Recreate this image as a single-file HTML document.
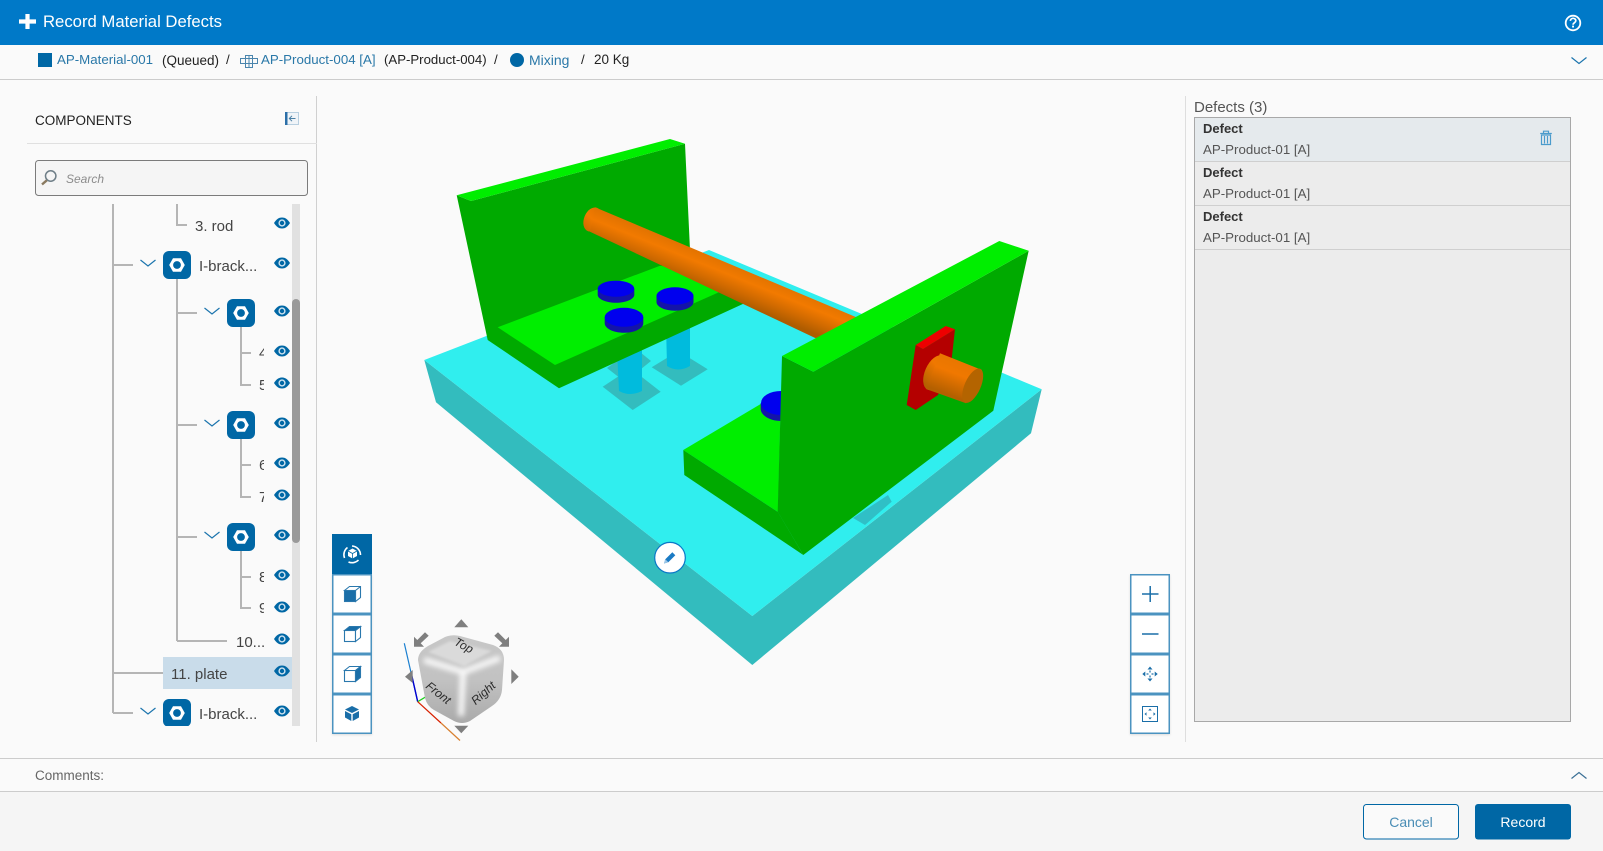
<!DOCTYPE html>
<html lang="en">
<head>
<meta charset="utf-8">
<title>Record Material Defects</title>
<style>
html,body{margin:0;padding:0;width:1603px;height:851px;overflow:hidden;background:#fafafa}
body{font-family:"Liberation Sans",sans-serif;position:relative}
#g{position:absolute;left:0;top:0}
.t{position:absolute;white-space:nowrap;line-height:20px;height:20px}
.l{color:#2a78a8;font-size:13.3px}
.k{color:#222;font-size:13.3px}
.n{color:#444;font-size:15px}
.b{font-weight:bold;font-size:13px;color:#333;left:1203px}
.d{font-size:13.3px;color:#555;left:1203px}
.clip{overflow:hidden}
</style>
</head>
<body>
<svg id="g" width="1603" height="851" viewBox="0 0 1603 851" xmlns="http://www.w3.org/2000/svg">
<defs>
<linearGradient id="rod" gradientUnits="userSpaceOnUse" x1="725" y1="260" x2="712" y2="292">
<stop offset="0" stop-color="#e07200"/><stop offset=".35" stop-color="#f27a00"/><stop offset=".7" stop-color="#d06a00"/><stop offset="1" stop-color="#ae5c00"/>
</linearGradient>
<linearGradient id="stub" gradientUnits="userSpaceOnUse" x1="963" y1="361" x2="950" y2="395">
<stop offset="0" stop-color="#e87600"/><stop offset=".4" stop-color="#f07800"/><stop offset="1" stop-color="#b46000"/>
</linearGradient>
<linearGradient id="cb" x1="0" y1="0" x2="0" y2="1">
<stop offset="0" stop-color="#c8c8c8"/><stop offset=".5" stop-color="#c2c2c2"/><stop offset="1" stop-color="#a8a8a8"/>
</linearGradient>
<filter id="bl" x="-30%" y="-30%" width="160%" height="160%"><feGaussianBlur stdDeviation="2.6"/></filter>
<filter id="bs" x="-20%" y="-20%" width="140%" height="140%"><feGaussianBlur stdDeviation="1.4"/></filter>
<clipPath id="cc"><path d="M418 660Q418 652 428 646L445 637Q452 634 460 636L493 645Q504 649 504 660L502 690Q501 700 492 706L470 721Q462 725 454 721L434 710Q427 706 425 698Z"/></clipPath>
<symbol id="eye" viewBox="0 0 16 11" overflow="visible">
<path d="M0 5.5C2.5 1.5 5 0 8 0s5.5 1.5 8 5.5C13.5 9.500 11 11 8 11S2.500 9.500 0 5.500Z" fill="#0067a5"/>
<circle cx="8" cy="5.500" r="3.600" fill="#cfe3f0"/><circle cx="8" cy="5.500" r="2.200" fill="#0067a5"/>
</symbol>
<symbol id="nut" viewBox="0 0 28 28">
<rect width="28" height="28" rx="6" fill="#0067a5"/>
<path d="M6.200 14L10 7.200H18L21.800 14 18 20.800H10Z" fill="#fff"/>
<circle cx="14" cy="14" r="3.900" fill="#0067a5"/>
</symbol>
<symbol id="chev" viewBox="0 0 16 8" overflow="visible"><path d="M.5 .5L8 6.500 15.500 .5" fill="none" stroke="#1b74ad" stroke-width="1.200"/></symbol>
</defs>

<!-- header -->
<rect width="1603" height="45" fill="#0079c8"/>
<path d="M19 21.500h17M27.500 14v15" stroke="#fff" stroke-width="4.200"/>
<circle cx="1573" cy="23" r="7.300" fill="none" stroke="#fff" stroke-width="1.800"/>
<path d="M1570.400 20.900c0-3.400 5.400-3.400 5.400-.2 0 2-2.700 2-2.700 4" fill="none" stroke="#fff" stroke-width="1.700"/>
<rect x="1572.100" y="25.600" width="1.900" height="1.900" fill="#fff"/>

<!-- breadcrumb -->
<rect x="0" y="79" width="1603" height="1" fill="#cccccc"/>
<rect x="38" y="53" width="14" height="14" fill="#0067a5"/>
<g fill="none" stroke="#4a85ad" stroke-width="1">
<path d="M240.500 58.500h17v5h-17zM245.500 55.500h7v12h-7zM249 55.500v12"/>
</g>
<circle cx="517" cy="60" r="7" fill="#0067a5"/>
<use href="#chev" x="1571" y="57" width="16" height="8"/>

<!-- dividers -->
<rect x="316" y="96" width="1" height="646" fill="#d0d0d0"/>
<rect x="1185" y="96" width="1" height="646" fill="#dedede"/>
<rect x="27" y="143" width="290" height="1" fill="#e0e0e0"/>

<!-- collapse icon -->
<rect x="285.500" y="112.500" width="13" height="12" fill="#f0f4f8" stroke="#b8cfe0"/>
<rect x="285" y="112" width="2.500" height="13" fill="#2b6fa8"/>
<path d="M295.500 118.500h-6M292 115.800l-2.700 2.700 2.700 2.700" fill="none" stroke="#4a7fa5" stroke-width="1"/>

<!-- search -->
<rect x="35.500" y="160.500" width="272" height="35" rx="3" fill="#f5f5f5" stroke="#7b7b7b"/>
<circle cx="50.700" cy="176" r="5.200" fill="none" stroke="#6f7f88" stroke-width="1.500"/>
<path d="M46.800 180.300l-4.800 4.200" stroke="#8a7a60" stroke-width="2.400"/>

<!-- tree -->
<rect x="292" y="204" width="8" height="522" fill="#e1e1e1"/>
<path d="M292 303a4 4 0 0 1 8 0V539a4 4 0 0 1-8 0Z" fill="#9a9a9a"/>
<g stroke="#b5b5b5" stroke-width="2" fill="none">
<path d="M113 204V713M113 265H133M113 673H163M113 713H133"/>
<path d="M177 204V225H187"/>
<path d="M177 279V641M177 313H197M177 425H197M177 537H197M177 641H227"/>
<path d="M241 327V385H251M241 353H251"/>
<path d="M241 439V497H251M241 465H251"/>
<path d="M241 551V608H251M241 577H251"/>
</g>
<rect x="163" y="657" width="129" height="32" fill="#c9dcea"/>
<use href="#nut" x="163" y="251" width="28" height="28"/>
<use href="#nut" x="227" y="299" width="28" height="28"/>
<use href="#nut" x="227" y="411" width="28" height="28"/>
<use href="#nut" x="227" y="523" width="28" height="28"/>
<svg x="163" y="699" width="28" height="27" viewBox="0 0 28 27"><use href="#nut" width="28" height="28"/></svg>
<use href="#chev" x="140" y="259.500" width="16" height="8"/>
<use href="#chev" x="204" y="307.500" width="16" height="8"/>
<use href="#chev" x="204" y="419.500" width="16" height="8"/>
<use href="#chev" x="204" y="531.500" width="16" height="8"/>
<use href="#chev" x="140" y="707.500" width="16" height="8"/>
<use href="#eye" x="274" y="217.500" width="16" height="11"/>
<use href="#eye" x="274" y="257.500" width="16" height="11"/>
<use href="#eye" x="274" y="305.500" width="16" height="11"/>
<use href="#eye" x="274" y="345.500" width="16" height="11"/>
<use href="#eye" x="274" y="377.500" width="16" height="11"/>
<use href="#eye" x="274" y="417.500" width="16" height="11"/>
<use href="#eye" x="274" y="457.500" width="16" height="11"/>
<use href="#eye" x="274" y="489.500" width="16" height="11"/>
<use href="#eye" x="274" y="529.500" width="16" height="11"/>
<use href="#eye" x="274" y="569.500" width="16" height="11"/>
<use href="#eye" x="274" y="601.500" width="16" height="11"/>
<use href="#eye" x="274" y="633.500" width="16" height="11"/>
<use href="#eye" x="274" y="665.500" width="16" height="11"/>
<use href="#eye" x="274" y="705.500" width="16" height="11"/>

<!-- 3D model -->
<polygon points="424.300,360 436,402.300 752.300,665 1031,433.300 1041.700,389.300 752.300,616" fill="#33bcbe"/>
<polygon points="424.300,360 709,250 1041.700,389.300 752.300,616" fill="#30eeee"/>
<polygon points="607,368 635,348 651,361 625,382" fill="#33bcbe"/>
<polygon points="602.700,386.700 630.700,368.300 660.700,391.700 632.700,410" fill="#33bcbe"/>
<polygon points="651.700,367.300 678.300,351 707.700,369.300 681,385.700" fill="#33bcbe"/>
<path d="M616.500 340H642V391Q630 397 619 391Z" fill="#00bbdd"/>
<path d="M666 325H690V366Q678 373 667 366Z" fill="#00bbdd"/>
<polygon points="853,518 888,495 891.700,501.700 865,525" fill="#30bfc6"/>

<!-- back bracket -->
<polygon points="456.700,195.300 471,201 685,143.700 690,250 745,303 559,388.300 487.700,340" fill="#00aa00"/>
<polygon points="456.700,195.300 670,139 685,143.700 471,201" fill="#00ee00"/>
<polygon points="497.700,327.300 660,265.700 700,270 720,291.700 555,365" fill="#00ee00"/>
<!-- discs -->
<path d="M597.700 288.700v6c0 4.400 8.200 8 18.300 8s18.300-3.600 18.300-8v-6Z" fill="#1414a8"/>
<ellipse cx="616" cy="288.700" rx="18.300" ry="8" fill="#0000ee"/>
<path d="M656.500 296v6c0 4.800 8.300 8.700 18.500 8.700s18.500-3.900 18.500-8.700v-6Z" fill="#1414a8"/>
<ellipse cx="675" cy="296" rx="18.500" ry="8.700" fill="#0000ee"/>
<path d="M604.700 317.300v6c0 5.200 8.600 9.500 19.300 9.500s19.300-4.300 19.300-9.500v-6Z" fill="#1414a8"/>
<ellipse cx="624" cy="317.300" rx="19.300" ry="9.500" fill="#0000ee"/>
<!-- rod -->
<ellipse cx="592.500" cy="219.500" rx="8.500" ry="12.500" transform="rotate(22 592.500 219.500)" fill="url(#rod)"/>
<polygon points="595,207.300 870,323 830,345 590,231.700" fill="url(#rod)"/>

<!-- front bracket -->
<polygon points="683.300,450 781,392 778,512" fill="#00ee00"/>
<polygon points="683.300,450 778,512 803.300,555 684.300,475" fill="#00aa00"/>
<path d="M760.700 403v6c0 6 8.700 12 20 12s20-6 20-12v-6Z" fill="#1414a8"/>
<ellipse cx="781" cy="403" rx="20" ry="12" fill="#0000ee"/>
<polygon points="782,356 813.300,371.700 1028.700,250.700 993.300,410.700 803.300,555 777.700,511.700" fill="#00aa00"/>
<polygon points="782,356 999.300,241 1028.700,250.700 813.300,371.700" fill="#00ee00"/>
<!-- red block -->
<polygon points="915.700,345 923,349 955,329.300 951,365 938,395 915.700,410 906.700,405" fill="#b40000"/>
<polygon points="915.700,345 945.700,326 955,329.300 923,349" fill="#ee0000"/>
<!-- stub -->
<ellipse cx="935" cy="372.700" rx="10" ry="18.500" transform="rotate(24 935 372.700)" fill="url(#stub)"/>
<polygon points="940,353.300 982,370 966,403.300 926,389" fill="url(#stub)"/>
<ellipse cx="972.700" cy="385.700" rx="8" ry="18.500" transform="rotate(24 972.700 385.700)" fill="#b46400"/>

<!-- edit button -->
<circle cx="670" cy="557.700" r="15.300" fill="#fff" stroke="#0a78c8" stroke-width="1.200"/>
<path d="M664 563.500l1.300-4.300 7-7 3 3-7 7Z" fill="#1b7bc4"/>
<path d="M664 563.500l1.300-4.300 3 3Z" fill="#9cc6e6"/>

<!-- left toolbar -->
<g fill="#fff" stroke="#4b93c0" stroke-width="1.500" style="filter:drop-shadow(0 1px 1px rgba(0,0,0,.12))">
<rect x="332.750" y="574.750" width="38.500" height="38.500"/>
<rect x="332.750" y="614.750" width="38.500" height="38.500"/>
<rect x="332.750" y="654.750" width="38.500" height="38.500"/>
<rect x="332.750" y="694.750" width="38.500" height="38.500"/>
</g>
<rect x="332" y="534" width="40" height="40" fill="#0067a5"/>
<path d="M348 551l4.500-2.500 4.500 2.500v5l-4.500 2.500-4.500-2.500Z" fill="#fff"/>
<path d="M348 551l4.500 2.500 4.500-2.500M352.500 553.500v5" fill="none" stroke="#0067a5" stroke-width=".8"/>
<g fill="none" stroke="#fff" stroke-width="1.600">
<path d="M344.500 558a9 9 0 0 1 3-10.500"/>
<path d="M352 546a9 9 0 0 1 8.500 9"/>
<path d="M358.500 560a9 9 0 0 1-10 2"/>
</g>
<g stroke="#2a78ad" stroke-width="1.100" fill="#fff">
<g transform="translate(344.500 586)">
<path d="M0 4.500L5 .5H16V11.500L11 15.500V4.500Z M11 4.500L16 .5"/><rect x="0" y="4.500" width="11" height="11" fill="#1a6ea8"/>
</g>
<g transform="translate(344.500 626)">
<rect x="0" y="4.500" width="11" height="11"/><path d="M11 4.500L16 .5V11.500L11 15.500Z"/><path d="M0 4.500L5 .5H16L11 4.500Z" fill="#1a6ea8"/>
</g>
<g transform="translate(344.500 666)">
<rect x="0" y="4.500" width="11" height="11"/><path d="M0 4.500L5 .5H16L11 4.500Z"/><path d="M11 4.500L16 .5V11.500L11 15.500Z" fill="#1a6ea8"/>
</g>
</g>
<g fill="#1a6ea8" transform="translate(345 706)">
<path d="M7 0l7 3.500-7 3.500-7-3.500Z"/><path d="M0 5l6.300 3.200V15L0 11.500Z"/><path d="M14 5L7.700 8.200V15L14 11.500Z"/>
</g>

<!-- nav cube -->
<path d="M404.300 643.300L417.700 701.700" stroke="#1a7fd0" stroke-width="1.200"/>
<path d="M411 672L417.700 701.700" stroke="#0000d0" stroke-width="1.400"/>
<path d="M417.700 701.700L426 696.700" stroke="#20d020" stroke-width="1.200"/>
<path d="M417.700 701.700L441 723" stroke="#d82000" stroke-width="1.200"/>
<path d="M441 723L460 740.500" stroke="#d88030" stroke-width="1.200"/>
<g fill="#7f7f7f">
<polygon points="454.300,627.300 468.300,627.300 461.300,619.300"/>
<polygon points="454.300,725.700 468.300,725.700 461.300,733.300"/>
<polygon points="511.300,669.300 511.300,684 518.700,676.700"/>
<polygon points="412.700,670 412.700,683 405,676.700"/>
<polygon points="414,636.700 414,646.700 424,646.700 420.700,643.300 428.700,635.700 425,632.300 417.300,640"/>
<polygon points="509,636.700 509,646.700 499,646.700 502.300,643.300 494.300,635.700 498,632.300 505.700,640"/>
</g>
<g clip-path="url(#cc)">
<rect x="415" y="632" width="92" height="95" fill="url(#cb)"/>
<path d="M428 652L450 641 492 651 464 666Z" fill="#dadada" filter="url(#bs)"/>
<g fill="none" stroke="#fff" filter="url(#bl)" opacity=".9">
<path d="M424 660L463 672 500 658" stroke-width="6"/><path d="M463 672L461 716" stroke-width="6"/>
</g>
</g>
<g font-family="'Liberation Sans',sans-serif" font-style="italic" font-size="12" fill="#2a2a2a" text-anchor="middle">
<text transform="translate(462 649) rotate(28)">Top</text>
<text transform="translate(436 696) rotate(38)">Front</text>
<text transform="translate(486 696) rotate(-42)">Right</text>
</g>

<!-- right toolbar -->
<g fill="#fff" stroke="#4b93c0" stroke-width="1.500" style="filter:drop-shadow(0 1px 1px rgba(0,0,0,.12))">
<rect x="1130.750" y="574.750" width="38.500" height="38.500"/>
<rect x="1130.750" y="614.750" width="38.500" height="38.500"/>
<rect x="1130.750" y="654.750" width="38.500" height="38.500"/>
<rect x="1130.750" y="694.750" width="38.500" height="38.500"/>
</g>
<g stroke="#1a6ea8" fill="none">
<path d="M1142 594h16.500M1150.200 586v16" stroke-width="1.500"/>
<path d="M1142 634h16.500" stroke-width="1.500"/>
<rect x="1142.500" y="706.500" width="15" height="15" stroke-width="1"/>
</g>
<g fill="#1a6ea8">
<path d="M1150 666.500l2.500 3h-5ZM1150 681.500l2.500-3h-5ZM1142.300 674l3-2.500v5ZM1157.700 674l-3-2.500v5Z"/>
<rect x="1149.400" y="670.500" width="1.200" height="2"/><rect x="1149.400" y="675.500" width="1.200" height="2"/>
<rect x="1146.500" y="673.400" width="2" height="1.200"/><rect x="1151.500" y="673.400" width="2" height="1.200"/>
<path d="M1150 708.500l1.800 2h-3.600ZM1150 719.500l1.800-2h-3.600ZM1144.500 714l2-1.800v3.600ZM1155.500 714l-2-1.800v3.600Z"/>
</g>

<!-- defects -->
<rect x="1194.500" y="117.500" width="376" height="604" fill="#ececec" stroke="#a8a8a8"/>
<rect x="1195" y="118" width="375" height="43.500" fill="#e5eaed"/>
<rect x="1195" y="161" width="375" height="1" fill="#cfcfcf"/>
<rect x="1195" y="205" width="375" height="1" fill="#cfcfcf"/>
<rect x="1195" y="249" width="375" height="1" fill="#cfcfcf"/>
<g fill="none" stroke="#4a9bcc" stroke-width="1.200">
<path d="M1540.200 133.500h11.600M1543.500 133v-1.800h5v1.800"/>
<path d="M1541.500 135h9v9.500h-9z"/>
<path d="M1544.500 136v7.500M1547.500 136v7.500"/>
</g>

<!-- bottom -->
<rect x="0" y="758" width="1603" height="1" fill="#cccccc"/>
<rect x="0" y="791.500" width="1603" height="59.500" fill="#f5f5f5"/>
<rect x="0" y="791" width="1603" height="1" fill="#cccccc"/>
<path d="M1571.500 778.500L1579 772.500 1586.500 778.500" fill="none" stroke="#3a6f95" stroke-width="1.200"/>
<rect x="1363.500" y="804.500" width="95" height="34.500" rx="3" fill="#fafafa" stroke="#0067a5"/>
<rect x="1475" y="804" width="96" height="35.500" rx="3" fill="#0067a5"/>
</svg>

<div class="t" style="left:43px;top:12px;font-size:16.7px;color:#fff">Record Material Defects</div>

<div class="t l" style="left:57px;top:50px">AP-Material-001</div>
<div class="t k" style="left:162px;top:51px;font-size:13.500px">(Queued)</div>
<div class="t k" style="left:226px;top:50px">/</div>
<div class="t l" style="left:261px;top:50px">AP-Product-004 [A]</div>
<div class="t k" style="left:384px;top:50px;font-size:13.200px">(AP-Product-004)</div>
<div class="t k" style="left:494px;top:50px">/</div>
<div class="t l" style="left:529px;top:50px;font-size:14px">Mixing</div>
<div class="t k" style="left:581px;top:50px">/</div>
<div class="t k" style="left:594px;top:50px;font-size:13.500px">20 Kg</div>

<div class="t" style="left:35px;top:111px;font-size:13.500px;color:#222">COMPONENTS</div>
<div class="t" style="left:66px;top:169px;font-size:12px;font-style:italic;color:#8c8c8c">Search</div>

<div class="t n" style="left:195px;top:217px">3. rod</div>
<div class="t n" style="left:199px;top:257px">I-brack...</div>
<div class="t n clip" style="left:259px;top:344px;width:5px">4</div>
<div class="t n clip" style="left:259px;top:376px;width:5px">5</div>
<div class="t n clip" style="left:259px;top:456px;width:5px">6</div>
<div class="t n clip" style="left:259px;top:488px;width:5px">7</div>
<div class="t n clip" style="left:259px;top:568px;width:5px">8</div>
<div class="t n clip" style="left:259px;top:599px;width:5px">9</div>
<div class="t n" style="left:236px;top:632.500px">10...</div>
<div class="t n" style="left:171px;top:664.500px">11. plate</div>
<div class="t n" style="left:199px;top:705px">I-brack...</div>

<div class="t" style="left:1194px;top:98px;font-size:15px;color:#555">Defects (3)</div>
<div class="t b" style="top:119px">Defect</div>
<div class="t d" style="top:140px">AP-Product-01 [A]</div>
<div class="t b" style="top:163px">Defect</div>
<div class="t d" style="top:184px">AP-Product-01 [A]</div>
<div class="t b" style="top:207px">Defect</div>
<div class="t d" style="top:228px">AP-Product-01 [A]</div>

<div class="t" style="left:35px;top:766px;font-size:13.500px;color:#666">Comments:</div>
<div class="t" style="left:1363px;width:96px;top:812px;text-align:center;font-size:14px;color:#4a8db5">Cancel</div>
<div class="t" style="left:1475px;width:96px;top:812px;text-align:center;font-size:14px;color:#fff">Record</div>
</body>
</html>
